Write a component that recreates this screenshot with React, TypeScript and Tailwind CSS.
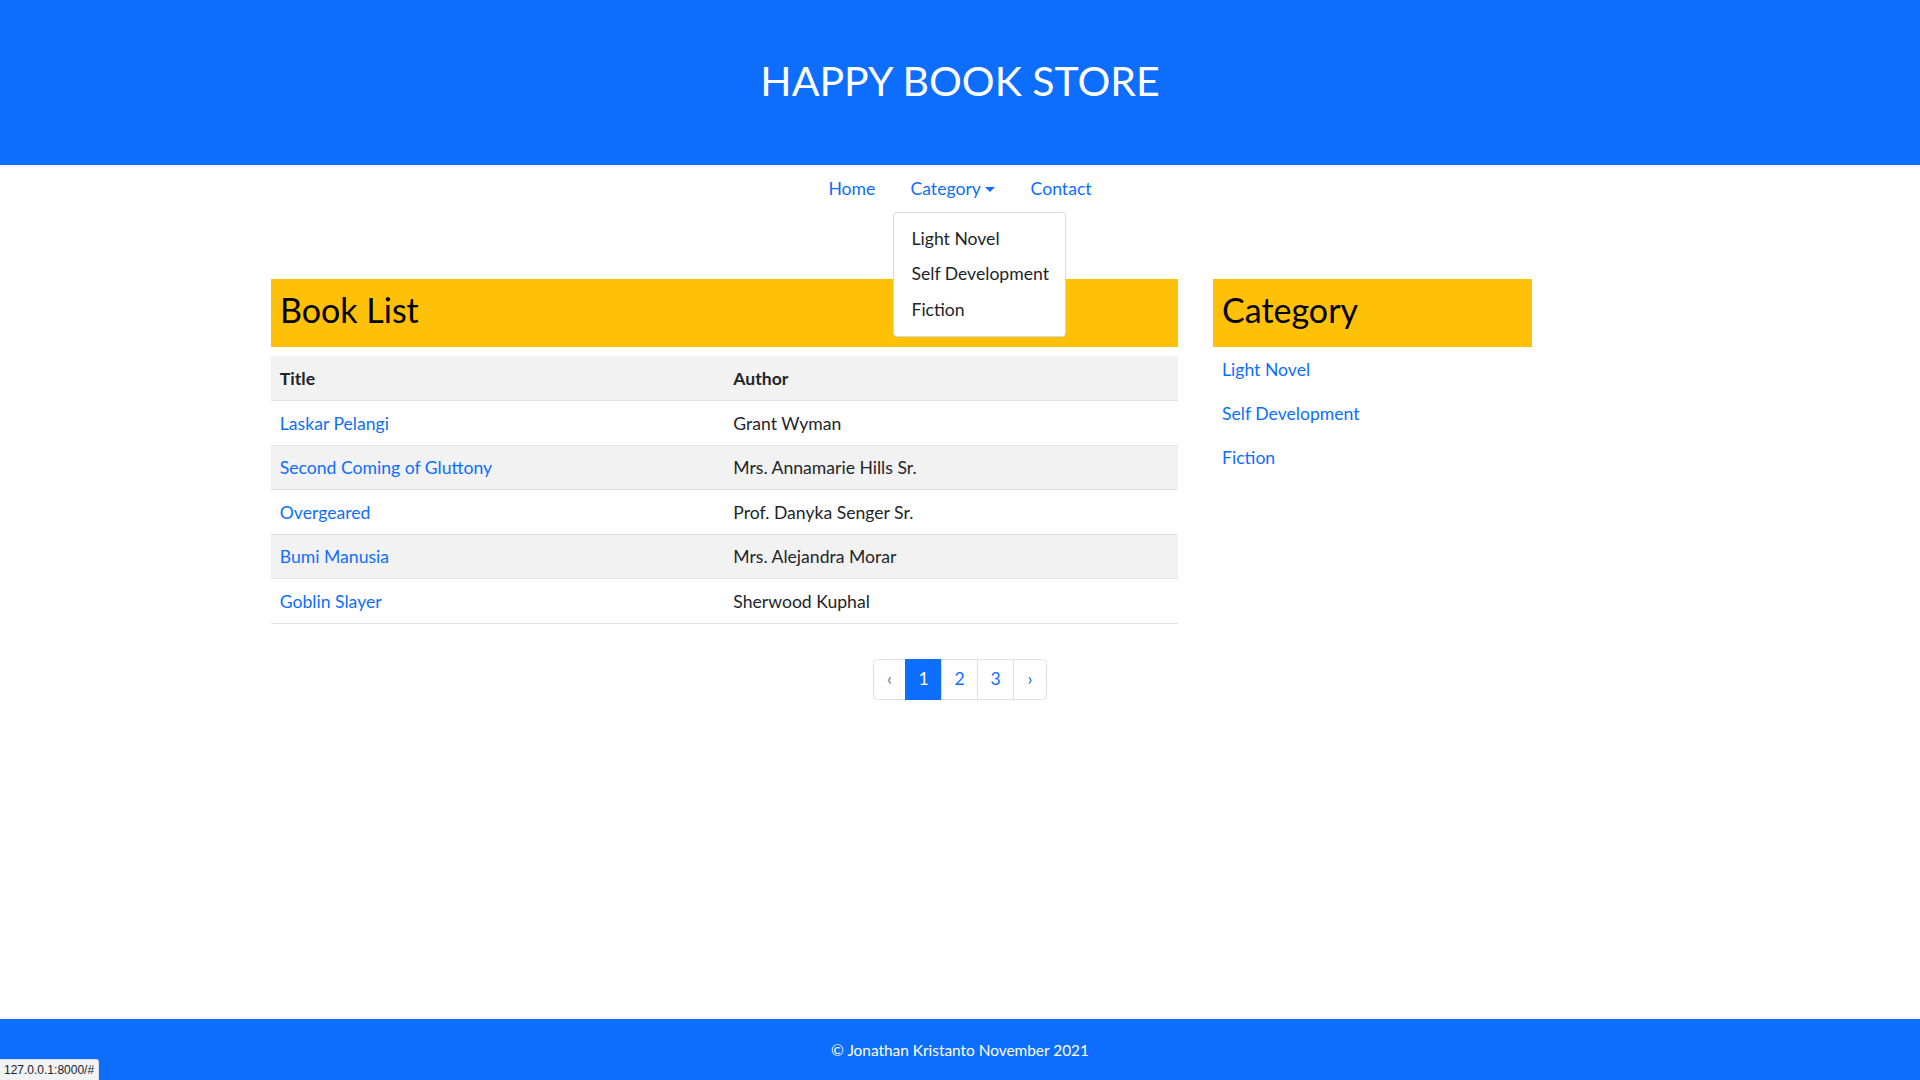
const books = [
    { title: "Laskar Pelangi", author: "Grant Wyman" },
    { title: "Second Coming of Gluttony", author: "Mrs. Annamarie Hills Sr." },
    { title: "Overgeared", author: "Prof. Danyka Senger Sr." },
    { title: "Bumi Manusia", author: "Mrs. Alejandra Morar" },
    { title: "Goblin Slayer", author: "Sherwood Kuphal" },
];

const categories = ["Light Novel", "Self Development", "Fiction"];

const App = () => {
    return (
        <div className="relative flex flex-col h-screen w-full bg-white text-[#212529] text-[17.6px] font-['Lato','Open_Sans',sans-serif]">
            <header className="h-[165px] w-full bg-[#0d6efd] flex items-center justify-center shrink-0">
                <h1 className="text-white text-[41px] leading-[1.2] pb-[4px]">HAPPY BOOK STORE</h1>
            </header>

            <nav className="flex justify-center h-[44px] pt-[2px] shrink-0">
                <a className="px-[17.6px] leading-[44px] text-[#0d6efd]">Home</a>
                <div className="relative">
                    <a className="px-[17.6px] leading-[44px] text-[#0d6efd] flex items-center">
                        Category
                        <span className="ml-[4.5px] w-0 h-0 border-t-[5.3px] border-t-[#0d6efd] border-x-[5.3px] border-x-transparent" />
                    </a>
                    <div className="absolute left-0 top-[45px] z-10 w-[173px] bg-white border border-black/15 rounded-[4.4px] py-[8.8px]">
                        {categories.map((c) => (
                            <div key={c} className="px-[17.6px] h-[35.2px] flex items-center whitespace-nowrap text-[#212529]">{c}</div>
                        ))}
                    </div>
                </div>
                <a className="px-[17.6px] leading-[44px] text-[#0d6efd]">Contact</a>
            </nav>

            <main className="flex-1 w-[1452px] mx-auto pt-[70px]">
                <div className="flex gap-[35px] pl-[37px]">
                    <section className="w-[907px]">
                        <h2 className="bg-[#ffc107] h-[68px] px-[9px] pb-[5px] flex items-center text-[34px] text-black leading-[1.2] mb-[9px]">Book List</h2>
                        <table className="w-full border-collapse">
                            <thead>
                                <tr className="bg-[#f2f2f2] h-[44.5px] border-b border-[#dee2e6]">
                                    <th className="w-1/2 text-left font-bold px-[8.8px] pt-[2px]">Title</th>
                                    <th className="text-left font-bold px-[8.8px] pt-[2px]">Author</th>
                                </tr>
                            </thead>
                            <tbody>
                                {books.map((b, i) => (
                                    <tr key={b.title} className={`h-[44.5px] border-b border-[#dee2e6] ${i % 2 === 1 ? "bg-[#f2f2f2]" : "bg-white"}`}>
                                        <td className="px-[8.8px] pt-[2px] text-[#0d6efd]">{b.title}</td>
                                        <td className="px-[8.8px] pt-[2px]">{b.author}</td>
                                    </tr>
                                ))}
                            </tbody>
                        </table>
                    </section>
                    <aside className="w-[319px]">
                        <h2 className="bg-[#ffc107] h-[68px] px-[9px] pb-[5px] flex items-center text-[34px] text-black leading-[1.2]">Category</h2>
                        <div className="flex flex-col pt-[10px] gap-[17.6px] px-[9px]">
                            {categories.map((c) => (
                                <a key={c} className="text-[#0d6efd] leading-[26.4px]">{c}</a>
                            ))}
                        </div>
                    </aside>
                </div>
            </main>

            <div className="absolute top-[659px] left-0 w-full flex justify-center">
                <ul className="flex h-[41px]">
                    <li className="w-[33px] flex items-center justify-center border border-[#dee2e6] rounded-l-[4.4px] text-[#6c757d]">‹</li>
                    <li className="w-[37px] flex items-center justify-center bg-[#0d6efd] border border-[#0d6efd] text-white -ml-px">1</li>
                    <li className="w-[37px] flex items-center justify-center border border-[#dee2e6] text-[#0d6efd] -ml-px">2</li>
                    <li className="w-[37px] flex items-center justify-center border border-[#dee2e6] text-[#0d6efd] -ml-px">3</li>
                    <li className="w-[34px] flex items-center justify-center border border-[#dee2e6] rounded-r-[4.4px] text-[#0d6efd] -ml-px">›</li>
                </ul>
            </div>

            <footer className="h-[61px] bg-[#0d6efd] flex items-center justify-center shrink-0">
                <p className="text-white text-[15.4px] pt-[2px]">© Jonathan Kristanto November 2021</p>
            </footer>

            <div className="absolute left-0 bottom-0 h-[21px] px-[4px] flex items-center bg-[#f1f3f4] border-t border-r border-[#dadce0] rounded-tr-[3px] text-[12px] text-[#202124] font-['Liberation_Sans',sans-serif]">
                127.0.0.1:8000/#
            </div>
        </div>
    );
};

export default App;
